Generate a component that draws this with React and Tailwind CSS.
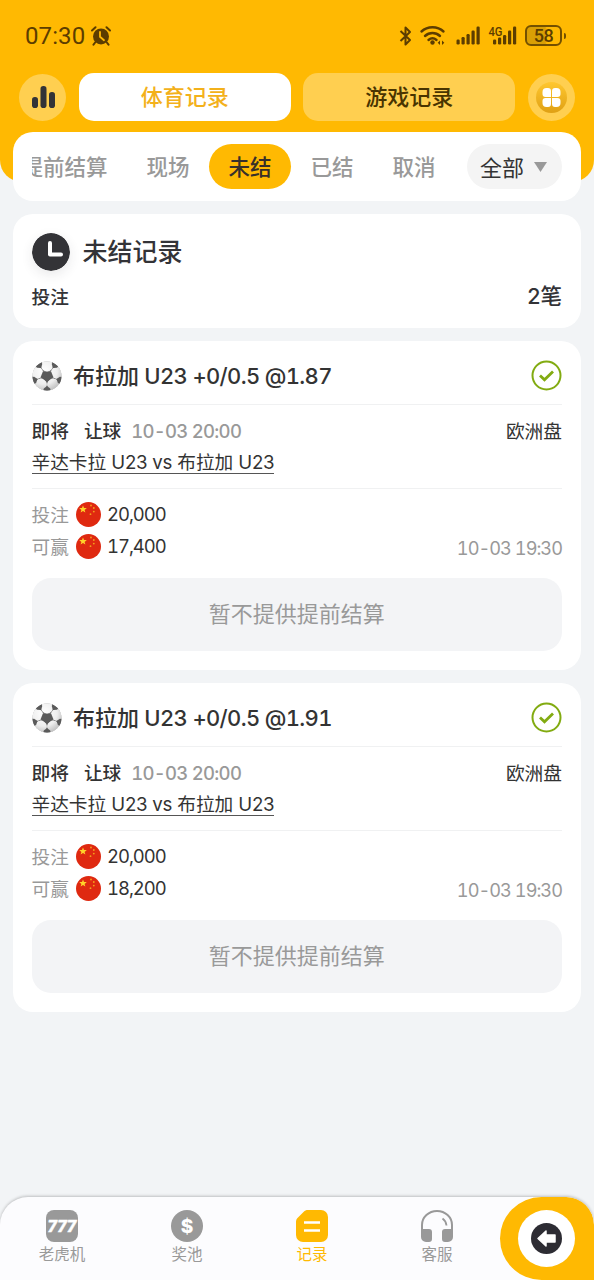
import clsx from 'clsx';

const tabs = ['提前结算', '现场', '未结', '已结', '取消'];

const bets = [
  { id: 1, odds: '@1.87', stake: '20,000', win: '17,400' },
  { id: 2, odds: '@1.91', stake: '20,000', win: '18,200' },
];

function SignalBars({ x, heights }) {
  return heights.map((h, i) => (
    <rect key={i} x={x + i * 5} y={20.5 - h} width="3.2" height={h} rx="1.2" />
  ));
}

function StatusBar() {
  return (
    <div className="flex h-[73px] items-center justify-between pr-[28px] pb-[2px] pl-[25px] text-[#5c3d00]">
      <div className="flex items-center gap-[6px]">
        <span className="font-['Roboto',sans-serif] text-[24px] leading-[30px] tracking-[0.1px]">07:30</span>
        <svg width="20" height="20" viewBox="0 0 20 20" fill="none">
          <circle cx="10" cy="10.4" r="8" fill="currentColor" />
          <path d="M1 4.5 4.5 1.2M19 4.5 15.5 1.2M4.5 16 2.5 18.6M15.5 16l2 2.6" stroke="currentColor" strokeWidth="2" strokeLinecap="round" />
          <path d="M9 6v4.800l4 3.400" stroke="#ffb902" strokeWidth="1.800" strokeLinecap="round" />
        </svg>
      </div>
      <div className="flex items-center">
        <svg width="126" height="24" viewBox="0 0 126 24" fill="currentColor">
          <path d="M1.500 7 11 16l-4.500 4.500V3.500L11 8l-9.500 9" fill="none" stroke="currentColor" strokeWidth="2" strokeLinejoin="round" />
          <g fill="none" stroke="currentColor" strokeWidth="2.400" strokeLinecap="round">
            <path d="M22.500 7.500c6-5.600 16-5.600 22 0M26 12c4.300-4 10.700-4 15 0M29.500 16c2.500-2.200 5.500-2.200 8 0" />
          </g>
          <circle cx="33.500" cy="18.500" r="2.200" />
          <path d="m41 16.500-2.300 2.200L41 21zM43 16.500l2.300 2.200L43 21z" />
          <SignalBars x={57.5} heights={[5, 7.5, 10.5, 14, 18]} />
          <SignalBars x={94} heights={[5, 7, 9.5, 14, 18]} />
          <text x="89.500" y="11.500" className="font-['Roboto',sans-serif] text-[12px] font-medium" textLength="14" lengthAdjust="spacingAndGlyphs">4G</text>
        </svg>
        <div className="flex h-[21px] w-[37px] items-center justify-center rounded-[6px] border-2 border-[#735000] bg-linear-to-r from-[#d99f05] from-55% to-[#ffb902] to-60%">
          <span className="font-['Roboto',sans-serif] text-[18px] leading-[18px] font-medium tracking-[-0.500px]">58</span>
        </div>
        <div className="ml-[2px] h-[6px] w-[2px] rounded-r bg-[#735000]" />
      </div>
    </div>
  );
}

function Header() {
  return (
    <header className="h-[182px] rounded-b-[22px] bg-[#ffb902]">
      <StatusBar />
      <div className="flex items-center justify-between px-[19px] text-[22px] font-medium">
        <button className="flex size-[47px] items-center justify-center rounded-full bg-[#ffcf50]">
          <svg width="24" height="24" viewBox="0 0 24 24" fill="#333337">
            <rect x="1" y="12" width="6" height="11" rx="2.800" />
            <rect x="9.500" y="1" width="6" height="22" rx="2.800" />
            <rect x="18" y="7" width="6" height="16" rx="2.800" />
          </svg>
        </button>
        <button className="h-[48px] w-[212px] rounded-[15px] bg-white pb-[3px] text-[#f3b11b]">体育记录</button>
        <button className="h-[48px] w-[212px] rounded-[15px] bg-[#ffcf50] pb-[3px] text-[#493400]">游戏记录</button>
        <button className="flex size-[47px] items-center justify-center rounded-full bg-[#ffcf50]">
          <svg width="31" height="31" viewBox="0 0 31 31">
            <defs>
              <linearGradient id="menu" x1="0" y1="0" x2="0" y2="1">
                <stop offset="0" stopColor="#ffc72f" />
                <stop offset="1" stopColor="#dfa014" />
              </linearGradient>
            </defs>
            <circle cx="15.500" cy="15.500" r="15.500" fill="url(#menu)" />
            <g fill="#fff">
              <path d="M10.500 6h1.500a3 3 0 0 1 3 3v6H9.500A3 3 0 0 1 6.500 12v-2a4 4 0 0 1 4-4z" />
              <path d="M20.500 6H19a3 3 0 0 0-3 3v6h5.500a3 3 0 0 0 3-3v-2a4 4 0 0 0-4-4z" />
              <path d="M10.500 25h1.500a3 3 0 0 0 3-3v-6H9.500a3 3 0 0 0-3 3v2a4 4 0 0 0 4 4z" />
              <path d="M20.500 25H19a3 3 0 0 1-3-3v-6h5.500a3 3 0 0 1 3 3v2a4 4 0 0 1-4 4z" />
            </g>
          </svg>
        </button>
      </div>
    </header>
  );
}

function FilterBar() {
  return (
    <section className="flex h-[69px] items-center rounded-[20px] bg-white px-[19px] text-[21.500px]">
      <div className="flex w-[423px] shrink-0 justify-end overflow-hidden">
        {tabs.map((t) => (
          <button
            key={t}
            className={clsx(
              'h-[45px] shrink-0 rounded-full px-[19.500px] font-medium',
              t === '未结' ? 'bg-[#ffb902] text-[#38302a]' : 'text-[#999]'
            )}
          >
            {t}
          </button>
        ))}
      </div>
      <button className="ml-auto flex h-[45px] w-[95px] items-center justify-center gap-[10px] rounded-full bg-[#f4f4f4] pr-[2px] text-[22px] text-[#333]">
        全部
        <svg width="13" height="10" viewBox="0 0 13 10">
          <path d="M0 0h13L6.500 10z" fill="#999" />
        </svg>
      </button>
    </section>
  );
}

function Summary() {
  return (
    <section className="h-[114px] rounded-[20px] bg-white pr-[19px] pl-[18.500px] pt-[18px] text-[#333337]">
      <div className="flex h-[40px] items-center gap-[13px]">
        <svg width="38" height="38" viewBox="0 0 38 38" className="rounded-full shadow-[0_4px_12px_rgba(51,51,55,0.100)]">
          <circle cx="19" cy="19" r="19" fill="#333337" />
          <path d="M18 10v11.500h11" fill="none" stroke="#fff" strokeWidth="4" strokeLinecap="round" strokeLinejoin="round" />
        </svg>
        <h1 className="pb-[3px] text-[25px] leading-[37px] font-medium">未结记录</h1>
      </div>
      <div className="mt-[8px] flex h-[32px] items-center justify-between font-medium">
        <span className="text-[18.700px]">投注</span>
        <span className="text-[21.500px]">
          <span className="font-['Inter',sans-serif]">2</span>笔
        </span>
      </div>
    </section>
  );
}

const spokes = [0, 72, 144, 216, 288];

function Ball() {
  return (
    <svg width="30" height="30" viewBox="-15 -15 30 30">
      <defs>
        <radialGradient id="ball" gradientUnits="userSpaceOnUse" cx="-3" cy="-5" r="22">
          <stop offset="0" stopColor="#fff" />
          <stop offset=".6" stopColor="#ededed" />
          <stop offset="1" stopColor="#b5b5b5" />
        </radialGradient>
        <clipPath id="ballEdge">
          <circle r="14.500" />
        </clipPath>
      </defs>
      <g clipPath="url(#ballEdge)">
        <circle r="15" fill="#777" />
        {spokes.map((a) => (
          <ellipse key={a} cy="-10.500" rx="5.900" ry="5.900" fill="#f0f0f0" transform={`rotate(${a})`} />
        ))}
        {spokes.map((a) => (
          <ellipse key={a} cx={Math.sin((a * Math.PI) / 180) * 10.5} cy={Math.cos((a * Math.PI) / 180) * -10.5} rx="5.700" ry="5.700" fill="url(#ball)" />
        ))}
        <path d="M-4.300-4h8.600l2 5L0 6-6.300 1z" fill="#5a5a5a" />
        {spokes.map((a) => (
          <path key={a} d="M-4 16-3.200 12.500 0 10l3.200 2.500L4 16z" fill="#5a5a5a" transform={`rotate(${a})`} />
        ))}
      </g>
    </svg>
  );
}

function Flag() {
  return (
    <svg width="25" height="25" viewBox="0 0 25 25" className="mb-[2px]">
      <circle cx="12.500" cy="12.500" r="12.500" fill="#df2910" />
      <path d="m7 3.400 1 2.600 2.800.1-2.200 1.800.8 2.700L7 9.100l-2.400 1.500.8-2.700-2.200-1.800L6 6z" fill="#ffd42a" />
      <g fill="#f4a01c">
        <circle cx="15" cy="3.500" r=".9" />
        <circle cx="17.800" cy="6" r=".9" />
        <circle cx="17.800" cy="9.600" r=".9" />
        <circle cx="14.500" cy="12.200" r=".9" />
      </g>
    </svg>
  );
}

function Amount({ label, value }) {
  return (
    <div className="flex h-[32px] items-center">
      <span className="w-[44.500px] pb-[2px] text-[18.700px] text-[#999]">{label}</span>
      <Flag />
      <span className="ml-[6px] font-['Inter',sans-serif] text-[18.500px] tracking-[-1.050px] text-[#333] tabular-nums">{value}</span>
    </div>
  );
}

function BetCard({ bet }) {
  return (
    <section className="h-[329px] rounded-[20px] bg-white pr-[19px] pl-[18.500px] text-[#333]">
      <div className="flex h-[64px] items-center justify-between border-b border-[#f0f1f2] pt-[6px]">
        <div className="flex items-center text-[22px] font-medium">
          <Ball />
          <span className="ml-[11.500px] pb-[1px] whitespace-pre">
            布拉加<span className="font-['Inter',sans-serif] text-[22px] tracking-[-0.650px] tabular-nums"> U23 +0/0.5 {bet.odds}</span>
          </span>
        </div>
        <svg width="31" height="31" viewBox="0 0 31 31" fill="none" stroke="#82ab11">
          <circle cx="15.500" cy="15.500" r="14" strokeWidth="2" />
          <path d="m9 15.500 4.500 4.300 8.500-8.300" strokeWidth="2.800" />
        </svg>
      </div>
      <div className="border-b border-[#f0f1f2] pt-[9px] pb-[10px] text-[18.700px]">
        <div className="flex h-[32px] items-center">
          <span className="font-medium">即将</span>
          <span className="ml-[15px] font-medium">让球</span>
          <span className="ml-[10px] pt-[3px] font-['Inter',sans-serif] text-[18.500px] font-medium tracking-[-0.720px] text-[#999] tabular-nums">10-03 20:00</span>
          <span className="ml-auto">欧洲盘</span>
        </div>
        <div className="flex h-[32px] items-center">
          <span className="border-b border-[#555] leading-[21px] whitespace-pre">
            辛达卡拉<span className="font-['Inter',sans-serif] tracking-[-0.250px]"> U23 vs </span>布拉加<span className="font-['Inter',sans-serif] tracking-[-0.250px]"> U23</span>
          </span>
        </div>
      </div>
      <div className="flex items-end justify-between pt-[10px]">
        <div>
          <Amount label="投注" value={bet.stake} />
          <Amount label="可赢" value={bet.win} />
        </div>
        <span className="font-['Inter',sans-serif] text-[18.200px] leading-[30px] tracking-[-0.980px] text-[#999] tabular-nums">10-03 19:30</span>
      </div>
      <button className="mt-[15px] h-[73px] w-full rounded-[19px] bg-[#f3f4f6] pb-[4px] text-[22px] text-[#999]">暂不提供提前结算</button>
    </section>
  );
}

function NavItem({ label, active, children }) {
  return (
    <a className={clsx('flex w-[125px] flex-col items-center pt-[13px]', active ? 'text-[#ffb902]' : 'text-[#999]')}>
      <svg width="32" height="32" viewBox="0 0 32 32" fill="currentColor">
        {children}
      </svg>
      <span className="text-[15.500px] leading-[22px]">{label}</span>
    </a>
  );
}

function BottomNav() {
  return (
    <nav className="mt-auto flex h-[83px] justify-between overflow-hidden rounded-t-[28px] bg-[#fcfcfe] shadow-[0_-1px_3px_rgba(0,0,0,0.220)]">
      <div className="-ml-[0.500px] flex">
        <NavItem label="老虎机">
          <rect width="32" height="32" rx="8" />
          <text x="1.500" y="22" fill="#fff" stroke="#fff" strokeWidth=".4" className="font-['Roboto',sans-serif] text-[17px] font-black italic" textLength="29" lengthAdjust="spacingAndGlyphs">777</text>
        </NavItem>
        <NavItem label="奖池">
          <circle cx="16" cy="16" r="16" />
          <text x="16" y="22.500" textAnchor="middle" fill="#fff" className="font-['Inter',sans-serif] text-[19px] font-extrabold">$</text>
        </NavItem>
        <NavItem label="记录" active>
          <path d="M12 0h13a7 7 0 0 1 7 7v18a7 7 0 0 1-7 7H7a7 7 0 0 1-7-7V12c0-2 .5-3 2-4.500L7.500 2C9 .5 10 0 12 0z" />
          <path d="M8 12.500h16M8 20.500h16" stroke="#fff" strokeWidth="2.600" />
        </NavItem>
        <NavItem label="客服">
          <path d="M1 22v-7a15 14 0 0 1 30 0v7" fill="none" stroke="currentColor" strokeWidth="2" />
          <path d="M21.500 8.500c2.300 1.600 3.700 4 4 7" fill="none" stroke="currentColor" strokeWidth="1.800" />
          <path d="M0 19h8a3 3 0 0 1 3 3v7a3 3 0 0 1-3 3H5a5 5 0 0 1-5-5zM32 19h-8a3 3 0 0 0-3 3v7a3 3 0 0 0 3 3h3a5 5 0 0 0 5-5z" />
        </NavItem>
      </div>
      <button className="flex w-[95px] items-center justify-center rounded-[42px_28px_0_42px] bg-[#ffb902]">
        <span className="flex size-[57px] items-center justify-center rounded-full bg-white">
          <svg width="31" height="31" viewBox="0 0 31 31">
            <circle cx="15.500" cy="15.500" r="15.500" fill="#2d2c33" />
            <path d="M7 15.500 15 8v4h9v7h-9v4z" fill="#fff" stroke="#fff" strokeWidth="1.500" strokeLinejoin="round" />
          </svg>
        </span>
      </button>
    </nav>
  );
}

export default function App() {
  return (
    <div className="flex min-h-screen w-[594px] flex-col bg-[#f2f4f6] font-['Noto_Sans_CJK_SC',sans-serif]">
      <Header />
      <main className="relative -mt-[50px] flex flex-col gap-[13px] px-[13px]">
        <FilterBar />
        <Summary />
        {bets.map((b) => (
          <BetCard key={b.id} bet={b} />
        ))}
      </main>
      <BottomNav />
    </div>
  );
}
